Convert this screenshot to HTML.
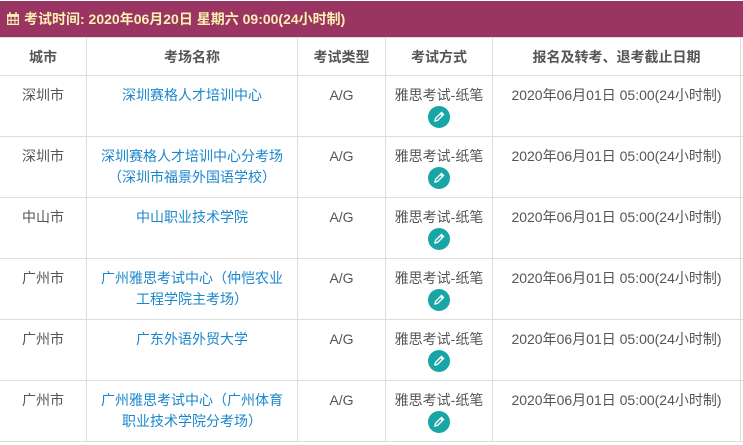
<!DOCTYPE html>
<html><head><meta charset="utf-8"><style>
body{margin:0;width:743px;height:445px;overflow:hidden;background:#fff;font-family:"Liberation Sans","Noto Sans CJK SC",sans-serif;font-size:14px;color:#555;position:relative}
.bar{position:absolute;left:0;top:1px;width:743px;height:36px;background:#993463;color:#fbf0b0;font-weight:bold;font-size:14px;line-height:36px}
.bar span{position:absolute;left:24px}
.cal{position:absolute;left:7px;top:11px;width:12px;height:13px}
table{position:absolute;left:-1px;top:37px;border-collapse:collapse;table-layout:fixed;width:761px}
td,th{border:1px solid #ddd;text-align:center;vertical-align:top;padding:9px 0 0;line-height:21px;overflow:hidden;white-space:nowrap}
th{height:28px;padding-top:9px;font-weight:bold;color:#555}
td{height:51px}
a{color:#1a87cc;text-decoration:none}
.ic{display:inline-block;width:22px;height:22px;border-radius:50%;background:#17a5a5;vertical-align:top;position:relative}
.ic svg{position:absolute;left:5px;top:5px}
</style></head><body>
<div class="bar"><svg class="cal" viewBox="0 0 11 12"><rect x="0.6" y="2.6" width="9.8" height="8.8" fill="none" stroke="#fbf0b0" stroke-width="1.2"/><rect x="0" y="2" width="11" height="2.5" fill="#fbf0b0"/><path d="M3.7 4v7M7.3 4v7M0 7.7h11" stroke="#fbf0b0" stroke-width="1"/><rect x="2" y="0" width="1.4" height="3" fill="#fbf0b0"/><rect x="7.6" y="0" width="1.4" height="3" fill="#fbf0b0"/></svg><span>考试时间: 2020年06月20日 星期六 09:00(24小时制)</span></div>
<table>
<colgroup><col style="width:87px"><col style="width:211px"><col style="width:88px"><col style="width:107px"><col style="width:248px"><col style="width:20px"></colgroup>
<tr><th>城市</th><th>考场名称</th><th>考试类型</th><th>考试方式</th><th>报名及转考、退考截止日期</th><th></th></tr>
<tr><td>深圳市</td><td><a>深圳赛格人才培训中心</a></td><td>A/G</td><td>雅思考试-纸笔<br><i class="ic"><svg width="12" height="12" viewBox="0 0 12 12"><path d="M2 10l.6-2.6L8.5 1.5l2 2-5.9 5.9z M7.5 2.5l2 2" fill="none" stroke="#fff" stroke-width="1.4"/></svg></i></td><td>2020年06月01日 05:00(24小时制)</td><td></td></tr>
<tr><td>深圳市</td><td><a>深圳赛格人才培训中心分考场<br>（深圳市福景外国语学校）</a></td><td>A/G</td><td>雅思考试-纸笔<br><i class="ic"><svg width="12" height="12" viewBox="0 0 12 12"><path d="M2 10l.6-2.6L8.5 1.5l2 2-5.9 5.9z M7.5 2.5l2 2" fill="none" stroke="#fff" stroke-width="1.4"/></svg></i></td><td>2020年06月01日 05:00(24小时制)</td><td></td></tr>
<tr><td>中山市</td><td><a>中山职业技术学院</a></td><td>A/G</td><td>雅思考试-纸笔<br><i class="ic"><svg width="12" height="12" viewBox="0 0 12 12"><path d="M2 10l.6-2.6L8.5 1.5l2 2-5.9 5.9z M7.5 2.5l2 2" fill="none" stroke="#fff" stroke-width="1.4"/></svg></i></td><td>2020年06月01日 05:00(24小时制)</td><td></td></tr>
<tr><td>广州市</td><td><a>广州雅思考试中心（仲恺农业<br>工程学院主考场）</a></td><td>A/G</td><td>雅思考试-纸笔<br><i class="ic"><svg width="12" height="12" viewBox="0 0 12 12"><path d="M2 10l.6-2.6L8.5 1.5l2 2-5.9 5.9z M7.5 2.5l2 2" fill="none" stroke="#fff" stroke-width="1.4"/></svg></i></td><td>2020年06月01日 05:00(24小时制)</td><td></td></tr>
<tr><td>广州市</td><td><a>广东外语外贸大学</a></td><td>A/G</td><td>雅思考试-纸笔<br><i class="ic"><svg width="12" height="12" viewBox="0 0 12 12"><path d="M2 10l.6-2.6L8.5 1.5l2 2-5.9 5.9z M7.5 2.5l2 2" fill="none" stroke="#fff" stroke-width="1.4"/></svg></i></td><td>2020年06月01日 05:00(24小时制)</td><td></td></tr>
<tr><td>广州市</td><td><a>广州雅思考试中心（广州体育<br>职业技术学院分考场）</a></td><td>A/G</td><td>雅思考试-纸笔<br><i class="ic"><svg width="12" height="12" viewBox="0 0 12 12"><path d="M2 10l.6-2.6L8.5 1.5l2 2-5.9 5.9z M7.5 2.5l2 2" fill="none" stroke="#fff" stroke-width="1.4"/></svg></i></td><td>2020年06月01日 05:00(24小时制)</td><td></td></tr>
</table>
</body></html>
